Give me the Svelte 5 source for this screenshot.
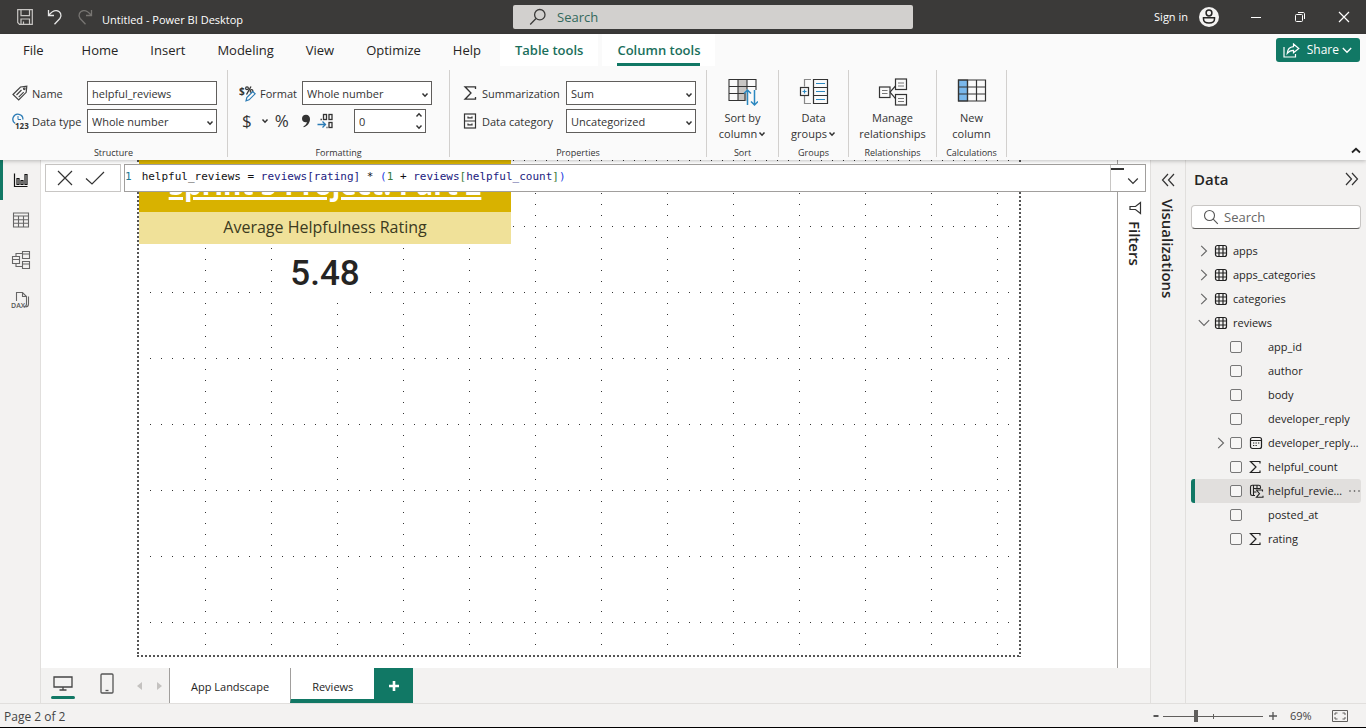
<script>
  const menu = ['File', 'Home', 'Insert', 'Modeling', 'View', 'Optimize', 'Help'];
  const tables = [
    { name: 'apps', open: false },
    { name: 'apps_categories', open: false },
    { name: 'categories', open: false },
    { name: 'reviews', open: true }
  ];
  const fields = [
    { name: 'app_id' },
    { name: 'author' },
    { name: 'body' },
    { name: 'developer_reply' },
    { name: 'developer_reply_date', icon: 'date', expand: true },
    { name: 'helpful_count', icon: 'sum' },
    { name: 'helpful_reviews', icon: 'calc', selected: true },
    { name: 'posted_at' },
    { name: 'rating', icon: 'sum' }
  ];
  let columnName = $state('helpful_reviews');
  let decimals = $state('0');
  let zoom = $state(32);
</script>

{#snippet caret()}
  <svg class="caret" width="8" height="6" viewBox="0 0 8 6"><path d="M1.5 1.5 4 4.2 6.5 1.5" fill="none" stroke="#333" stroke-width="1.5" /></svg>
{/snippet}

{#snippet sigma()}
  <svg width="14" height="16" viewBox="0 0 14 16"><path d="M12.500 4V1.800H2L8 8 2 14.200h10.500V12" fill="none" stroke="#333" stroke-width="1.300" /></svg>
{/snippet}

<div class="app">
  <header class="titlebar">
    <div class="title-left">
      <button class="bare" aria-label="Save">
        <svg width="16" height="16" viewBox="0 0 16 16" fill="none" stroke="#c8c6c4" stroke-width="1.200"><path d="M.7.7h14.600v14.600H2.500L.7 13.500zM4 .7v6h8.500v-6M4 15v-5h8.500v5M6.500 15v-2.500" /></svg>
      </button>
      <button class="bare" aria-label="Undo">
        <svg width="16" height="16" viewBox="0 0 16 16" fill="none" stroke="#e6e6e6" stroke-width="1.300"><path d="M1.500 1v5.500H7M1.800 6.200C4 3.500 6.300 1.500 9.300 1.700c4.200.3 6 4.800 3.600 7.800L7.500 15.300" /></svg>
      </button>
      <button class="bare" aria-label="Redo">
        <svg width="16" height="16" viewBox="0 0 16 16" fill="none" stroke="#777572" stroke-width="1.300"><path d="M14.500 1v5.500H9M14.200 6.200C12 3.500 9.700 1.500 6.700 1.700 2.500 2 .7 6.500 3.100 9.500l5.400 5.800" /></svg>
      </button>
      <span class="doc">Untitled - Power BI Desktop</span>
    </div>
    <label class="top-search">
      <svg width="18" height="18" viewBox="0 0 18 18" fill="none" stroke="#3b3a39" stroke-width="1.300"><circle cx="10.800" cy="6.700" r="5.200" /><path d="M7 10.500 1.200 16.500" /></svg>
      <input type="text" placeholder="Search" aria-label="Search" />
    </label>
    <div class="title-right">
      <button class="bare signin">Sign in
        <svg width="20" height="20" viewBox="0 0 20 20"><circle cx="10" cy="10" r="10" fill="#f3f2f1" /><circle cx="10" cy="6" r="2.900" fill="none" stroke="#252423" stroke-width="1.500" /><path d="M4.500 10.800h11v1.200c0 2.700-2.500 4-5.500 4s-5.500-1.300-5.500-4z" fill="none" stroke="#252423" stroke-width="1.500" /></svg>
      </button>
      <button class="bare win" aria-label="Minimize"><svg width="12" height="12" viewBox="0 0 12 12"><path d="M1 6.500h10" stroke="#fff" /></svg></button>
      <button class="bare win" aria-label="Restore"><svg width="12" height="12" viewBox="0 0 12 12" fill="none" stroke="#fff"><rect x="1.500" y="3.500" width="7" height="7" rx="1" /><path d="M4 1.500h5.200c1 0 1.300.6 1.300 1.300V8" /></svg></button>
      <button class="bare win" aria-label="Close"><svg width="12" height="12" viewBox="0 0 12 12"><path d="m1 1 10 10M11 1 1 11" stroke="#fff" stroke-width="1.200" /></svg></button>
    </div>
  </header>

  <section class="ribbon">
    <nav class="tabs">
      {#each menu as item}
        <button class="tab">{item}</button>
      {/each}
      <button class="tab tool first">Table tools</button>
      <button class="tab tool active"><span>Column tools</span></button>
      <button class="share">
        <svg width="17" height="15" viewBox="0 0 17 15" fill="none" stroke="#fff" stroke-width="1.200"><path d="M1 4v10h11.500v-3M10.500 1l5.300 4.500-5.300 4.300V7.300C7.500 7.300 6 8 4.200 10.500 4.500 6.500 7 4 10.500 3.700z" /></svg>
        <span>Share</span>
        <svg width="10" height="7" viewBox="0 0 10 7"><path d="m.8 1 4.200 4.300L9.200 1" fill="none" stroke="#fff" stroke-width="1.300" /></svg>
      </button>
    </nav>

    <div class="groups">
      <div class="group structure">
        <div class="fields">
          <svg width="16" height="16" viewBox="0 0 16 16" fill="none" stroke="#444" stroke-width="1.200"><path d="M1 9.500 8.500 2l6.300-.7-.6 6L6.700 15z" /><path d="m4.500 10 5-5M6.700 12.200l5-5" /><circle cx="12.300" cy="3.800" r=".8" /></svg>
          <label for="col-name">Name</label>
          <input id="col-name" type="text" bind:value={columnName} />
          <svg width="17" height="17" viewBox="0 0 17 17"><path d="M3.300 10.500A5 5 0 1 1 10.900 6.500" fill="none" stroke="#2b7bb5" stroke-width="1.300" /><path d="M6 3v3.500h3" fill="none" stroke="#2b7bb5" /><text x="3" y="16" font-family="Open Sans, sans-serif" font-size="8" font-weight="700" fill="#333">123</text></svg>
          <label for="data-type">Data type</label>
          <div class="pick"><select id="data-type"><option>Whole number</option></select>{@render caret()}</div>
        </div>
        <p class="caption">Structure</p>
      </div>

      <div class="group formatting">
        <div class="fields">
          <svg width="17" height="17" viewBox="0 0 17 17"><text x="0" y="10" font-family="Open Sans, sans-serif" font-size="10" font-weight="700" fill="#333">$</text><path d="m7.500 9.500 4.500-8" stroke="#333" stroke-width="1.300" /><circle cx="8" cy="3.200" r="1.400" fill="none" stroke="#333" stroke-width="1.200" /><circle cx="12.500" cy="6" r="1.400" fill="none" stroke="#333" stroke-width="1.200" /><path d="m7 15.800.8-3.300 6-6 2.300 2.300-6 6z" fill="#fafafa" stroke="#2b7bb5" stroke-width="1.200" /></svg>
          <label for="format">Format</label>
          <div class="pick"><select id="format"><option>Whole number</option></select>{@render caret()}</div>
        </div>
        <div class="number-tools">
          <button class="bare dollar" aria-label="Currency">$ {@render caret()}</button>
          <button class="bare percent" aria-label="Percent">%</button>
          <button class="bare" aria-label="Thousands separator"><svg width="10" height="14" viewBox="0 0 10 14"><path d="M5 .8c2.400 0 4 1.600 4 4.200 0 4-2.600 7-6.200 8.300l-.5-.8C4.500 11.200 5.700 9.800 5.900 8 3.300 8.800 1 7.300 1 4.700 1 2.400 2.700.8 5 .8z" fill="#333" /></svg></button>
          <button class="bare" aria-label="Decimal places"><svg width="17" height="17" viewBox="0 0 17 17" fill="none" stroke="#333" stroke-width="1.300"><rect x="6.500" y="1.500" width="3" height="5" /><rect x="12" y="1.500" width="3" height="5" /><rect x="12" y="9.500" width="3" height="5" /><path d="M3.500 6.500h1.400M9.500 14.500h1" /><path d="M.5 11.500h8M5.500 8.500l3 3-3 3" stroke="#2b7bb5" /></svg></button>
          <div class="pick stepper">
            <input type="text" aria-label="Decimals" bind:value={decimals} />
            <svg width="8" height="18" viewBox="0 0 8 18" fill="none" stroke="#333" stroke-width="1.400"><path d="M1.500 4.500 4 1.800l2.500 2.700M1.500 13.500 4 16.200l2.500-2.700" /></svg>
          </div>
        </div>
        <p class="caption">Formatting</p>
      </div>

      <div class="group properties">
        <div class="fields">
          {@render sigma()}
          <label for="summ">Summarization</label>
          <div class="pick"><select id="summ"><option>Sum</option></select>{@render caret()}</div>
          <svg width="14" height="16" viewBox="0 0 14 16" fill="none" stroke="#333" stroke-width="1.200"><rect x="1.500" y="1" width="11" height="14" /><path d="M1.500 8h11M5 3.500v1.300h4V3.500M5 10.500v1.300h4v-1.300" /></svg>
          <label for="cat">Data category</label>
          <div class="pick"><select id="cat"><option>Uncategorized</option></select>{@render caret()}</div>
        </div>
        <p class="caption">Properties</p>
      </div>

      <div class="group sort">
        <button class="big">
          <svg width="30" height="30" viewBox="0 0 30 30" fill="none" stroke="#333"><path d="M10 2h9v21h-9z" fill="#c8c6c4" stroke="none" /><path d="M1 1.500h27v7H1zM1 8.500v14h16v-7H1M10 1.500v21M19 1.500v10M28 8v4" stroke-width="1.100" /><path d="M19.500 27V12M16 15.500l3.500-3.500 3.500 3.500M26.500 12v15M23 23.500l3.500 3.500 3.500-3.500" stroke="#2b88c0" stroke-width="1.500" /></svg>
          <span>Sort by</span><span>column{@render caret()}</span>
        </button>
        <p class="caption">Sort</p>
      </div>
      <div class="group datagroups">
        <button class="big">
          <svg width="30" height="30" viewBox="0 0 30 30" fill="none" stroke="#333" stroke-width="1.200"><path d="M14.500 1.500h14v24h-14zM14.500 9.500h14M14.500 17.500h14" /><path d="M17 5.500h9M17 13.500h9M17 21.500h9" stroke="#2b88c0" /><path d="M12 1.500H5.500v7M5.500 18v7.500H12" stroke="#888" /><rect x="1.500" y="9.500" width="8" height="8" /><path d="M5.500 11.500v4M3.500 13.500h4" stroke="#2b88c0" /></svg>
          <span>Data</span><span>groups{@render caret()}</span>
        </button>
        <p class="caption">Groups</p>
      </div>
      <div class="group relations">
        <button class="big">
          <svg width="30" height="30" viewBox="0 0 30 30" fill="none" stroke="#333" stroke-width="1.200"><rect x="1.500" y="9" width="10.500" height="10.500" /><rect x="17.500" y="1" width="11" height="10.500" /><rect x="17.500" y="16.500" width="11" height="10.500" /><path d="M12 14.200 17.500 8M12 14.200l5.500 6.500" /><path d="M4 12.500h5.500M4 15.500h5.500M20 5h6M20 8h6M20 20.500h6M20 23.500h6" stroke="#777" stroke-width="1" /></svg>
          <span>Manage</span><span>relationships</span>
        </button>
        <p class="caption">Relationships</p>
      </div>
      <div class="group calc">
        <button class="big">
          <svg width="30" height="30" viewBox="0 0 30 30" fill="none" stroke="#333" stroke-width="1.200"><path d="M1.500 2h9v21h-9z" fill="#7ab8ec" /><path d="M1.500 2h27v21h-27zM1.500 9h27M1.500 16h27M10.500 2v21M19.500 2v21" /></svg>
          <span>New</span><span>column</span>
        </button>
        <p class="caption">Calculations</p>
      </div>
      <button class="bare collapse" aria-label="Collapse ribbon"><svg width="10" height="7" viewBox="0 0 10 7"><path d="M1 5.500 5 1.800l4 3.700" fill="none" stroke="#222" stroke-width="1.800" /></svg></button>
    </div>
  </section>

  <main class="work">
    <nav class="rail">
      <button class="bare on" aria-label="Report view"><svg width="16" height="16" viewBox="0 0 16 16" fill="none" stroke="#111" stroke-width="1.200"><path d="M1.500 1.500v13h13M4 6.500h2v6H4zM8 8.500h2v4H8zM12 2.500h2v10h-2z" /></svg></button>
      <button class="bare" aria-label="Table view"><svg width="18" height="16" viewBox="0 0 18 16" fill="none" stroke="#666" stroke-width="1.100"><path d="M1.500 1h15v14h-15zM1.500 4h15M1.500 7.700h15M1.500 11.300h15M6.500 4v11M11.500 4v11" /></svg></button>
      <button class="bare" aria-label="Model view"><svg width="20" height="20" viewBox="0 0 20 20" fill="none" stroke="#666" stroke-width="1.100"><path d="M1.500 6.500h7v7h-7zM11.500 1.500h7v7h-7zM11.500 11.500h7v7h-7zM1.500 9.500h7M11.500 4h7M11.500 14h7M5 6.500V3.500h6.500M5 13.500v3h6.500" /></svg></button>
      <button class="bare" aria-label="DAX query view"><svg width="20" height="20" viewBox="0 0 20 20"><path d="M5.500 11V2.500h6l4 4V14c0 2-1 2.500-2.500 2.500M11.500 2.500v4h4M17.500 6.500V14c0 2.500-1 3-3 3" fill="none" stroke="#666" stroke-width="1.100" /><text x="0" y="17.500" font-family="Open Sans, sans-serif" font-size="7" font-weight="600" fill="#555">DAX</text></svg></button>
    </nav>

    <div class="center">
      <div class="stage">
        <div class="report">
          <div class="page">
            <div class="card">
              <h1>Sprint 5 Project: Part 2</h1>
              <h2>Average Helpfulness Rating</h2>
              <p class="value"><span>5.48</span></p>
            </div>
          </div>
        </div>
        <aside class="filters">
          <svg width="14" height="14" viewBox="0 0 14 14" fill="none" stroke="#333" stroke-width="1.200"><path d="M12.500 1.500v11L7.500 8.500H2v-3h5.500z" /></svg>
          <span>Filters</span>
        </aside>
        <div class="formula">
          <div class="commit">
            <button class="bare" aria-label="Cancel"><svg width="16" height="16" viewBox="0 0 16 16"><path d="m1 1 14 14M15 1 1 15" stroke="#333" stroke-width="1.200" /></svg></button>
            <button class="bare" aria-label="Commit"><svg width="20" height="16" viewBox="0 0 20 16"><path d="m1 8.500 6 5.500L19 2" fill="none" stroke="#333" stroke-width="1.200" /></svg></button>
          </div>
          <div class="code">
            <code><span class="ln">1</span><span>helpful_reviews = <i>reviews[rating]</i> * <b>(</b><em>1</em> + <i>reviews</i><em>[</em><i>helpful_count</i><em>]</em><b>)</b></span></code>
            <button class="bare expand" aria-label="Expand formula"><svg width="12" height="8" viewBox="0 0 12 8"><path d="m1.200 1.500 4.800 4.800 4.800-4.800" fill="none" stroke="#333" stroke-width="1.200" /></svg></button>
          </div>
        </div>
      </div>

      <footer class="pages">
        <button class="bare device active" aria-label="Desktop layout"><svg width="20" height="15" viewBox="0 0 20 15" fill="none" stroke="#444" stroke-width="1.300"><path d="M1 1h18v10H1zM10 11v3M6.500 14h7" /></svg></button>
        <button class="bare device" aria-label="Mobile layout"><svg width="14" height="21" viewBox="0 0 14 21" fill="none" stroke="#555" stroke-width="1.300"><rect x="1" y="1" width="12" height="19" rx="1" /><path d="M5.500 17.500h3" /></svg></button>
        <button class="bare arrow" aria-label="Previous page"><svg width="5" height="8" viewBox="0 0 5 8"><path d="M5 0v8L0 4z" fill="#c4c2c0" /></svg></button>
        <button class="bare arrow" aria-label="Next page"><svg width="5" height="8" viewBox="0 0 5 8"><path d="M0 0v8l5-4z" fill="#c4c2c0" /></svg></button>
        <button class="sheet">App Landscape</button>
        <button class="sheet current">Reviews</button>
        <button class="add" aria-label="New page"><svg width="12" height="12" viewBox="0 0 12 12"><path d="M6 1v10M1 6h10" stroke="#fff" stroke-width="2.600" /></svg></button>
      </footer>
    </div>

    <aside class="viz">
      <svg width="14" height="14" viewBox="0 0 14 14" fill="none" stroke="#333" stroke-width="1.200"><path d="M7 1 1.500 7 7 13M13 1 7.500 7l5.500 6" /></svg>
      <span>Visualizations</span>
    </aside>

    <aside class="data">
      <div class="data-head">
        <h3>Data</h3>
        <button class="bare" aria-label="Collapse pane"><svg width="14" height="14" viewBox="0 0 14 14" fill="none" stroke="#333" stroke-width="1.200"><path d="m1 1 5.500 6L1 13M7 1l5.500 6L7 13" /></svg></button>
      </div>
      <label class="data-search">
        <svg width="16" height="16" viewBox="0 0 16 16" fill="none" stroke="#555" stroke-width="1.100"><circle cx="6.500" cy="6.500" r="5" /><path d="m10.200 10.200 4.600 4.600" /></svg>
        <input type="text" placeholder="Search" aria-label="Search fields" />
      </label>
      <ul>
        {#each tables as t}
          <li class="table-row">
            <svg width="12" height="12" viewBox="0 0 12 12" fill="none" stroke="#666" stroke-width="1.100"><path d={t.open ? 'm.8 3.200 5.200 5.300 5.200-5.300' : 'm3.200.8 5.300 5.200-5.300 5.200'} /></svg>
            <svg width="14" height="14" viewBox="0 0 14 14" fill="none" stroke="#222" stroke-width="1.200"><rect x="1.500" y="1.500" width="11" height="11" rx="2" /><path d="M1.500 5h11M1.500 9h11M5 1.500v11M9 1.500v11" /></svg>
            <span>{t.name}</span>
          </li>
        {/each}
        {#each fields as f}
          <li class="field-row" class:selected={f.selected}>
            <span class="slot">
              {#if f.expand}<svg width="12" height="12" viewBox="0 0 12 12"><path d="m3.200.8 5.300 5.200-5.300 5.200" fill="none" stroke="#666" stroke-width="1.100" /></svg>{/if}
            </span>
            <input type="checkbox" aria-label={f.name} />
            <span class="slot icon">
              {#if f.icon === 'sum'}
                <svg width="12" height="14" viewBox="0 0 12 14"><path d="M11 3.500V1.500H1.500L7 7l-5.500 5.500H11v-2" fill="none" stroke="#222" stroke-width="1.200" /></svg>
              {:else if f.icon === 'date'}
                <svg width="14" height="14" viewBox="0 0 14 14" fill="none" stroke="#222" stroke-width="1.200"><rect x="1.500" y="1.500" width="11" height="11" rx="2" /><path d="M1.500 4.500h11M4 7h1.300M6.500 7h1.300M9 7h1.300M4 9.500h1.300M6.500 9.500h1.300" /></svg>
              {:else if f.icon === 'calc'}
                <svg width="15" height="14" viewBox="0 0 15 14" fill="none" stroke="#222" stroke-width="1.100"><path d="M6 11.500H3.300c-1 0-1.800-.7-1.800-1.700V3c0-1 .8-1.700 1.800-1.700h6.400c1 0 1.800.7 1.800 1.700v1.500M4.500 4.500h7M4.500 8h3M4.500 1.300v10.200M8 1.300v3.200" /><path d="M13.500 7.500V6H7.500l3 3.700-3 3.500h6.500v-1.500" /></svg>
              {/if}
            </span>
            <span class="fname">{f.name}</span>
            {#if f.selected}<button class="bare more" aria-label="More options"><svg width="13" height="4" viewBox="0 0 13 4" fill="#444"><circle cx="2" cy="2" r=".8" /><circle cx="6.500" cy="2" r=".8" /><circle cx="11" cy="2" r=".8" /></svg></button>{/if}
          </li>
        {/each}
      </ul>
    </aside>
  </main>

  <footer class="status">
    <span class="count">Page 2 of 2</span>
    <button class="bare sign" aria-label="Zoom out"><svg width="6" height="8" viewBox="0 0 6 8"><path d="M.5 4h5" stroke="#444" stroke-width="1.800" /></svg></button>
    <div class="zoomer"><input type="range" min="0" max="100" bind:value={zoom} aria-label="Zoom" /></div>
    <button class="bare sign" aria-label="Zoom in"><svg width="8" height="8" viewBox="0 0 8 8"><path d="M0 4h8M4 0v8" stroke="#555" stroke-width="1.300" /></svg></button>
    <span class="pct">69%</span>
    <button class="bare" aria-label="Fit to page"><svg width="16" height="12" viewBox="0 0 16 12" fill="none" stroke="#605e5c"><path d="M.5.500h15v11H.5z" /><path d="M3 5V3h2.500M10.500 3H13v2M13 7v2h-2.500M5.500 9H3V7" /></svg></button>
  </footer>
</div>

<style>
  :global(body) { margin: 0; }
  .app {
    display: flex;
    flex-direction: column;
    height: 100vh;
    box-sizing: border-box;
    border-bottom: 1px solid #000;
    background: #fff;
    color: #333;
    font: 12px/16px "Open Sans", "Noto Sans", sans-serif;
    overflow: hidden;
  }
  .app *, .app *::before, .app *::after { box-sizing: border-box; }
  svg { display: block; flex: none; }
  button, input, select { font: inherit; color: inherit; }
  .bare { display: flex; align-items: center; padding: 0; border: 0; background: none; }

  .titlebar { display: flex; align-items: center; height: 34px; flex: none; background: #3b3a39; color: #fff; }
  .title-left { display: flex; align-items: center; flex: 1 1 76px; gap: 14px; padding-left: 17px; }
  .doc { margin: 6px 0 0 -5px; font-size: 11px; white-space: nowrap; }
  .top-search { display: flex; align-items: center; gap: 10px; flex: 0 1 400px; height: 24px; padding: 0 16px; border-radius: 2px; background: #d2d0ce; }
  .top-search input { flex: 1; min-width: 0; padding: 0; border: 0; outline: 0; background: none; font-size: 13px; }
  .top-search input::placeholder { color: #33695c; opacity: 1; }
  .title-right { display: flex; align-items: center; justify-content: flex-end; flex: 1 1 0; padding-right: 16px; }
  .signin { gap: 11px; margin-right: 31px; font-size: 11px; }
  .win { margin-left: 32px; }
  .signin + .win { margin-left: 0; }

  .ribbon { flex: none; position: relative; z-index: 2; background: #fafafa; box-shadow: 0 1px 4px rgba(0, 0, 0, .25); font-size: 11px; }
  .tabs { display: flex; height: 32px; padding-left: 7px; }
  .tab { padding: 0 16px; border: 0; background: none; font-size: 13px; color: #252423; }
  .tab:first-child { margin-right: 6px; }
  .tool { padding: 0 15px; background: #fff; color: #1b6f5c; font-weight: 600; }
  .first { margin-left: 3px; }
  .active { position: relative; }
  .tool.active { margin-left: 4px; }
  .tool.active span { display: flex; align-items: center; height: 100%; border-bottom: 3px solid #117865; padding-top: 2px; }
  .share { display: flex; align-items: center; gap: 7px; height: 24px; margin: 4px 6px 0 auto; padding: 0 8px 0 7px; border: 0; border-radius: 3px; background: #117865; color: #fff; font-size: 12px; }
  .share svg:last-child { margin-left: -4px; }

  .groups { display: flex; height: 94px; padding-top: 4px; }
  .group { display: flex; flex-direction: column; align-items: center; height: 87px; border-right: 1px solid #d2d0ce; }
  .structure { width: 228px; align-items: flex-start; padding-left: 12px; }
  .formatting { width: 222px; align-items: flex-start; padding-left: 11px; }
  .properties { width: 257px; align-items: flex-start; padding-left: 13px; }
  .sort { width: 72px; }
  .datagroups { width: 70px; }
  .relations { width: 88px; }
  .calc { width: 70px; }
  .fields { display: grid; grid-template-columns: 16px 51px 130px; grid-auto-rows: 24px; gap: 4px; align-items: center; margin-top: 11px; white-space: nowrap; }
  .fields label { padding-top: 2px; }
  .formatting .fields { grid-template-columns: 17px 38px 130px; }
  .properties .fields { grid-template-columns: 15px 80px 130px; }
  .fields input, .pick select, .pick input { display: block; width: 100%; height: 24px; margin: 0; padding: 1px 4px 0; border: 1px solid #605e5c; border-radius: 0; outline: 0; background: #fff; appearance: none; }
  .pick { position: relative; }
  .pick svg { position: absolute; right: 3px; top: 11px; }
  .stepper { width: 72px; margin-left: auto; }
  .pick.stepper svg { top: 3px; }
  .number-tools { display: flex; align-items: center; gap: 12px; width: 187px; height: 24px; margin-top: 4px; padding-left: 3px; }
  .dollar, .percent { font-size: 17px; }
  .dollar { gap: 9px; margin-right: -6px; }
  .number-tools .bare:nth-child(4) { margin-left: -6px; }
  .caption { align-self: stretch; margin: auto 0 0; font-size: 9px; line-height: 8px; text-align: center; white-space: nowrap; }
  .structure .caption { padding-right: 12px; }
  .formatting .caption { padding-right: 11px; }
  .properties .caption { padding-right: 13px; }
  .big { display: flex; flex-direction: column; align-items: center; margin-top: 8px; padding: 0; border: 0; background: none; white-space: nowrap; }
  .big > svg { margin-bottom: 2px; }
  .big span { display: flex; align-items: center; gap: 1px; line-height: 16px; }
  .collapse { align-self: flex-end; margin: 0 5px 6px auto; }

  .work { display: flex; flex: 1; min-height: 0; }
  .rail { display: flex; flex-direction: column; width: 41px; flex: none; border-right: 1px solid #e1dfdd; background: #f3f2f1; }
  .rail .bare { justify-content: center; height: 40px; padding-right: 2px; border-left: 3px solid transparent; }
  .rail .on { border-left-color: #117865; }

  .center { display: flex; flex-direction: column; flex: 1; min-width: 0; }
  .stage { position: relative; display: flex; flex: 1; min-height: 0; }
  .report { flex: 1; min-width: 0; padding: 0 96px 11px; }
  .page {
    height: 100%;
    padding: 0 10px 8px;
    --dot: conic-gradient(from 0deg at 1px 1px, transparent 270deg, #333 0);
    --edge: #555 0 2px, transparent 2px 4px;
    background:
      repeating-linear-gradient(180deg, var(--edge)) 0 0 / 2px 100% no-repeat,
      repeating-linear-gradient(180deg, var(--edge)) 100% 0 / 2px 100% no-repeat,
      repeating-linear-gradient(90deg, var(--edge)) 0 100% / 100% 2px no-repeat,
      var(--dot) 3px 0 / 11px 66px content-box,
      var(--dot) 58px 0 / 66px 11px content-box;
  }
  .card { width: 372px; margin-left: -8px; }
  .page h1 { height: 52px; margin: 0; padding-top: 6px; background: #d8b200; color: #fff; font-size: 28px; line-height: 36px; font-weight: 700; text-align: center; text-decoration: underline 3px; text-underline-offset: 2px; white-space: nowrap; }
  .page h2 { height: 32px; margin: 0; background: #f0e199; color: #3b3a20; font-size: 16px; font-weight: 400; line-height: 31px; text-align: center; }
  .value { display: flex; justify-content: center; margin: 0; }
  .value span { padding: 9px 9px 7px; background: #fff; color: #252423; font: 500 35px/42px Roboto, sans-serif; }

  .filters, .viz { display: flex; flex-direction: column; align-items: center; color: #252423; font-size: 15px; font-weight: 600; }
  .filters { width: 33px; gap: 6px; padding: 41px 0 0 2px; border-left: 1px solid #a19f9d; }
  .filters span, .viz span { writing-mode: vertical-rl; line-height: 18px; }
  .viz { width: 36px; flex: none; gap: 12px; padding-top: 13px; border: solid #e1dfdd; border-width: 0 1px; background: #f3f2f1; }

  .formula { position: absolute; left: 4px; right: 4px; top: 4px; display: flex; gap: 3px; height: 28px; }
  .commit, .code { border: 1px solid #a19f9d; background: #fff; }
  .commit { display: flex; gap: 12px; width: 76px; padding-left: 11px; border-color: #c8c6c4; }
  .code { display: flex; flex: 1; min-width: 0; }
  .code code { display: flex; flex: 1; gap: 10px; font: 11px/14px "DejaVu Sans Mono", monospace; color: #111; padding-top: 5px; white-space: pre; }
  .ln { color: #237893; }
  .code i { font-style: normal; color: #1b1b80; }
  .code b { font-weight: 400; color: #2340e0; }
  .code em { font-style: normal; color: #3a7a3a; }
  .expand { position: relative; justify-content: center; width: 35px; padding: 6px 0 0 10px; border-left: 1px solid #c8c6c4; }
  .expand::before { content: ""; position: absolute; left: 0; top: 3px; width: 13px; height: 2px; background: #333; }

  .pages { display: flex; flex: none; height: 35px; background: #f3f2f1; color: #252423; }
  .device { position: relative; justify-content: center; width: 44px; padding-bottom: 5px; }
  .device.active::after { content: ""; position: absolute; left: 10px; right: 10px; bottom: 4px; height: 3px; border-radius: 2px; background: #117865; }
  .arrow { width: 20px; justify-content: center; }
  .sheet { padding: 3px 21px 0; border: 0; border-left: 1px solid #a19f9d; background: #fff; font-size: 11px; }
  .current { border-bottom: 4px solid #117865; padding-top: 7px; }
  .add { display: grid; place-items: center; width: 39px; padding: 0; border: 0; background: #117865; }

  .data { width: 180px; flex: none; background: #f3f2f1; color: #252423; }
  .data-head { display: flex; align-items: center; justify-content: space-between; height: 38px; padding: 0 7px 0 8px; }
  .data-head h3 { margin: 0; font-size: 15px; line-height: 20px; font-weight: 600; }
  .data-search { display: flex; align-items: center; gap: 5px; height: 24px; margin: 7px 5px 10px; padding: 0 11px; border: 1px solid #c8c6c4; border-bottom-color: #605e5c; border-radius: 4px; background: #fff; }
  .data-search input { flex: 1; min-width: 0; padding: 0; border: 0; outline: 0; background: none; font-size: 13px; }
  .data-search input::placeholder { color: #666; opacity: 1; }
  .data ul { margin: 0; padding: 0 5px; list-style: none; font-size: 11px; }
  .data li { display: flex; align-items: center; height: 24px; }
  .table-row { gap: 4px; padding-left: 7px; }
  .table-row svg + svg { margin-right: 1px; }
  .field-row { padding-left: 20px; border-left: 4px solid transparent; border-radius: 3px; }
  .selected { border-left-color: #117865; background: #e1dfdd; }
  .slot { width: 12px; flex: none; }
  .slot.icon { width: 18px; margin-left: 7px; }
  .field-row input { appearance: none; width: 12px; height: 12px; flex: none; margin: 0 0 0 3px; border: 1px solid #777; border-radius: 2px; background: #f7f6f5; }
  .fname { flex: 1; min-width: 0; margin-left: 1px; overflow: hidden; text-overflow: ellipsis; white-space: nowrap; }
  .more { margin-left: 3px; }

  .status { display: flex; align-items: center; flex: none; height: 24px; padding: 0 18px 0 4px; border-top: 1px solid #e1dfdd; background: #f3f2f1; color: #444; font-size: 11px; }
  .count { margin-right: auto; padding-top: 2px; font-size: 12px; }
  .zoomer { position: relative; width: 100px; height: 12px; margin: 0 6px 0 4px; }
  .zoomer::after { content: ""; position: absolute; left: 50px; top: 4px; width: 1px; height: 5px; background: #605e5c; }
  .zoomer input { display: block; width: 100%; height: 12px; margin: 0; appearance: none; background: linear-gradient(#605e5c, #605e5c) 0 6px / 100% 1px no-repeat; }
  .zoomer input::-webkit-slider-thumb { appearance: none; width: 4px; height: 12px; background: #605e5c; }
  .pct { width: 24px; margin: 0 18px 0 13px; }
</style>
